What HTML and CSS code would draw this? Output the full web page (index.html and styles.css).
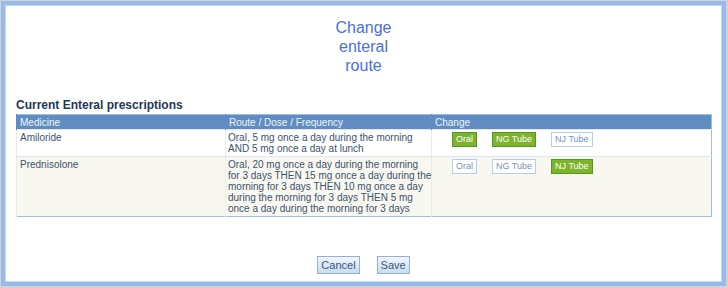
FILE: index.html
```html
<!DOCTYPE html>
<html>
<head>
<meta charset="utf-8">
<link rel="stylesheet" href="styles.css">
</head>
<body>
<div class="frame">
  <h1 class="title">Change enteral route</h1>
  <h2 class="section">Current Enteral prescriptions</h2>
  <table class="grid">
    <colgroup>
      <col class="c-med"><col class="c-route"><col class="c-change">
    </colgroup>
    <thead>
      <tr><th>Medicine</th><th>Route / Dose / Frequency</th><th>Change</th></tr>
    </thead>
    <tbody>
      <tr class="odd">
        <td>Amiloride</td>
        <td class="route">Oral, 5 mg once a day during the morning<br>AND 5 mg once a day at lunch</td>
        <td class="change">
          <div class="opts">
            <span class="opt on">Oral</span>
            <span class="opt on">NG Tube</span>
            <span class="opt">NJ Tube</span>
          </div>
        </td>
      </tr>
      <tr class="even">
        <td>Prednisolone</td>
        <td class="route">Oral, 20 mg once a day during the morning<br>for 3 days THEN 15 mg once a day during the<br>morning for 3 days THEN 10 mg once a day<br>during the morning for 3 days THEN 5 mg<br>once a day during the morning for 3 days</td>
        <td class="change">
          <div class="opts">
            <span class="opt">Oral</span>
            <span class="opt">NG Tube</span>
            <span class="opt on">NJ Tube</span>
          </div>
        </td>
      </tr>
    </tbody>
  </table>
  <div class="actions">
    <button class="btn" type="button">Cancel</button>
    <button class="btn" type="button">Save</button>
  </div>
</div>
</body>
</html>
```
FILE: styles.css
```css
html, body {
  margin: 0;
  padding: 0;
}
body {
  background: #d3d3d3;
  font-family: "Liberation Sans", Arial, sans-serif;
  width: 728px;
  height: 288px;
  overflow: hidden;
}
.frame {
  box-sizing: border-box;
  margin: 1px 2px 2px 1px;
  width: 725px;
  height: 285px;
  border: 4px solid #97bbec;
  box-shadow: inset 0 0 0 1px #c4d8f4;
  background: #ffffff;
  padding: 0 11px;
  display: flex;
  flex-direction: column;
}
.title {
  margin: 13px auto 0;
  width: 70px;
  text-align: center;
  font-weight: normal;
  font-size: 16px;
  line-height: 19px;
  color: #4a6fe2;
}
.section {
  margin: 23px 0 2px;
  font-size: 12px;
  line-height: 14px;
  font-weight: bold;
  color: #1d3957;
}
.grid {
  width: 695px;
  border-collapse: collapse;
  border: 1px solid #9dbde2;
  font-size: 10px;
  line-height: 11px;
  color: #3b526c;
  table-layout: fixed;
}
.c-med { width: 209px; }
.c-route { width: 206px; }
.c-change { width: 280px; }
.grid th {
  background: #5f8dc1;
  color: #eef4fb;
  font-weight: normal;
  text-align: left;
  padding: 2px 3px 1px;
  height: 11px;
  border-left: 1px solid #5f8dc1;
}
.grid td {
  vertical-align: top;
  padding: 2px 3px 2px;
  border-top: 1px solid #dfe6ee;
  border-left: 1px solid #e9ede6;
}
.grid td.route {
  white-space: nowrap;
  padding-left: 2px;
}
.grid tr.odd td { background: #ffffff; }
.grid tr.even td { background: #f8f8f1; }
.grid td.change { padding: 2px 3px 0 20px; }
.opts {
  display: flex;
  gap: 15px;
}
.opt {
  display: block;
  box-sizing: border-box;
  height: 15px;
  padding: 0 3px;
  border: 1px solid #b7cdec;
  background: #ffffff;
  color: #7893b6;
  font-size: 9px;
  line-height: 13px;
}
.opt.on {
  background: #7db42c;
  border-color: #4f9a1f;
  color: #ffffff;
}
.actions {
  margin-top: 39px;
  display: flex;
  justify-content: center;
  gap: 17px;
}
.btn {
  box-sizing: border-box;
  height: 18px;
  padding: 0 3px;
  margin: 0;
  font-family: "Liberation Sans", Arial, sans-serif;
  font-size: 11px;
  line-height: 16px;
  color: #38587e;
  border: 1px solid #94b1d2;
  border-radius: 0;
  background: linear-gradient(#f1f6fc, #c9dcf0);
}
```
